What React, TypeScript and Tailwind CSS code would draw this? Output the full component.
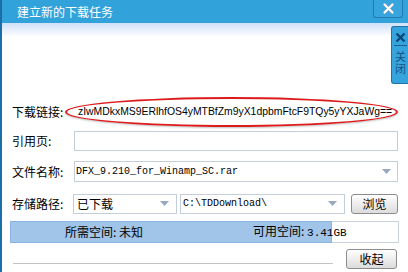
const cjk = '"Noto Sans CJK SC", "Liberation Sans", sans-serif';

function Arrow() {
  return (
    <svg width="9" height="5" viewBox="0 0 9 5" className="shrink-0">
      <path d="M0 0 H9 L4.5 5 Z" fill="#97a8bf" />
    </svg>
  );
}

function Btn({ label, w }: { label: string; w: string }) {
  return (
    <div className={`flex h-[20px] ${w} items-center justify-center rounded-[3px] border border-[#8c8c8c] bg-gradient-to-b from-[#ffffff] to-[#dcdcdc] text-[12px] text-black`}>
      {label}
    </div>
  );
}

export default function App() {
  return (
    <div
      className="relative h-[272px] w-[408px] overflow-hidden border-l-2 border-[#1b6ea8] bg-white"
      style={{ fontFamily: cjk }}
    >
      {/* title bar */}
      <div className="flex h-[23px] items-center bg-[#32a2db] pl-[15px] text-[12px] text-white">
        建立新的下载任务
      </div>
      <div className="h-[14px] bg-gradient-to-b from-[#cfe0f8] to-white" />

      {/* title close */}
      <div className="absolute right-[5px] top-0 flex h-[18px] w-[30px] items-center justify-center rounded-b-[3px] border border-t-0 border-[#2479b3] bg-[#37a5dd]">
        <svg width="11" height="11" viewBox="0 0 11 11">
          <path d="M1.5 1.5 L9.5 9.5 M9.5 1.5 L1.5 9.5" stroke="#9aa8b4" strokeWidth="3" strokeLinecap="round" />
          <path d="M1.5 1.5 L9.5 9.5 M9.5 1.5 L1.5 9.5" stroke="#ffffff" strokeWidth="1.8" strokeLinecap="round" />
        </svg>
      </div>

      {/* side close tab */}
      <div className="absolute right-0 top-[26px] flex h-[58px] w-[17px] flex-col items-center rounded-l-[3px] border border-r-0 border-[#1f73ad] bg-[#35a4dc]">
        <svg width="11" height="11" viewBox="0 0 11 11" className="mt-[5px]">
          <path d="M1.5 1.5 L9.5 9.5 M9.5 1.5 L1.5 9.5" stroke="#0d4775" strokeWidth="2.4" />
        </svg>
        <div className="mt-[2px] h-px w-[13px] bg-[#1b5f92]" />
        <div className="mt-[5px] text-[11px] leading-[13px] tracking-[1px] text-[#16507f] [writing-mode:vertical-rl]">
          关闭
        </div>
      </div>

      <div className="flex flex-col pl-[10px] pt-[60px] text-[12px] text-black">
        {/* row 1 */}
        <div className="flex h-[30px] items-center">
          <div className="w-[53px]">下载链接:</div>
          <div className="flex h-[30px] w-[333px] items-center overflow-hidden rounded-[50%] border-2 border-[#dc1c1c] pl-[11px] shadow-[0_1px_2px_rgba(0,0,0,0.25)]">
            <span className="whitespace-nowrap text-[10.4px] text-black" style={{ fontFamily: '"Liberation Sans", sans-serif' }}>
              zIwMDkxMS9ERlhfOS4yMTBfZm9yX1dpbmFtcF9TQy5yYXJaWg==
            </span>
          </div>
        </div>

        {/* row 2 */}
        <div className="mt-[4px] flex h-[20px] items-center">
          <div className="w-[62px]">引用页:</div>
          <div className="h-[20px] w-[324px] border border-[#c4ced8] bg-white" />
        </div>

        {/* row 3 */}
        <div className="mt-[10px] flex h-[21px] items-center">
          <div className="w-[62px]">文件名称:</div>
          <div className="flex h-[21px] w-[324px] items-center justify-between border border-[#c4ced8] bg-white pl-[1px] pr-[6px]">
            <span className="text-[10px]" style={{ fontFamily: '"Liberation Mono", monospace' }}>
              DFX_9.210_for_Winamp_SC.rar
            </span>
            <Arrow />
          </div>
        </div>

        {/* row 4 */}
        <div className="mt-[11px] flex h-[21px] items-center">
          <div className="w-[61px]">存储路径:</div>
          <div className="flex h-[20px] w-[104px] items-center justify-between border border-[#c4ced8] bg-white pl-[3px] pr-[7px]">
            <span>已下载</span>
            <Arrow />
          </div>
          <div className="ml-[3px] flex h-[20px] w-[165px] items-center justify-between border border-[#c4ced8] bg-white pl-[2px] pr-[7px]">
            <span className="text-[10px]" style={{ fontFamily: '"Liberation Mono", monospace' }}>
              C:\TDDownload\
            </span>
            <Arrow />
          </div>
          <div className="ml-[6px]">
            <Btn label="浏览" w="w-[47px]" />
          </div>
        </div>

        {/* row 5 progress */}
        <div className="relative -ml-[2px] mt-[7px] h-[22px] w-[389px] border border-[#c8d2dc] bg-white">
          <div className="absolute inset-y-[-1px] left-[-1px] w-[322px] border border-[#8ab4e2] bg-[#a1c4e9]" />
          <div className="relative flex h-full items-center">
            <span className="ml-[54px] w-[188px]">所需空间: 未知</span>
            <span>
              可用空间: <span className="text-[11px]" style={{ fontFamily: '"Liberation Mono", monospace' }}>3.41GB</span>
            </span>
          </div>
        </div>

        {/* row 6 */}
        <div className="mt-[6px] flex h-[19px] items-center">
          <div className="ml-[1px] mt-[9px] h-px w-[320px] bg-[#c3c3c3]" />
          <div className="ml-[13px]">
            <Btn label="收起" w="w-[51px]" />
          </div>
        </div>
      </div>
    </div>
  );
}
